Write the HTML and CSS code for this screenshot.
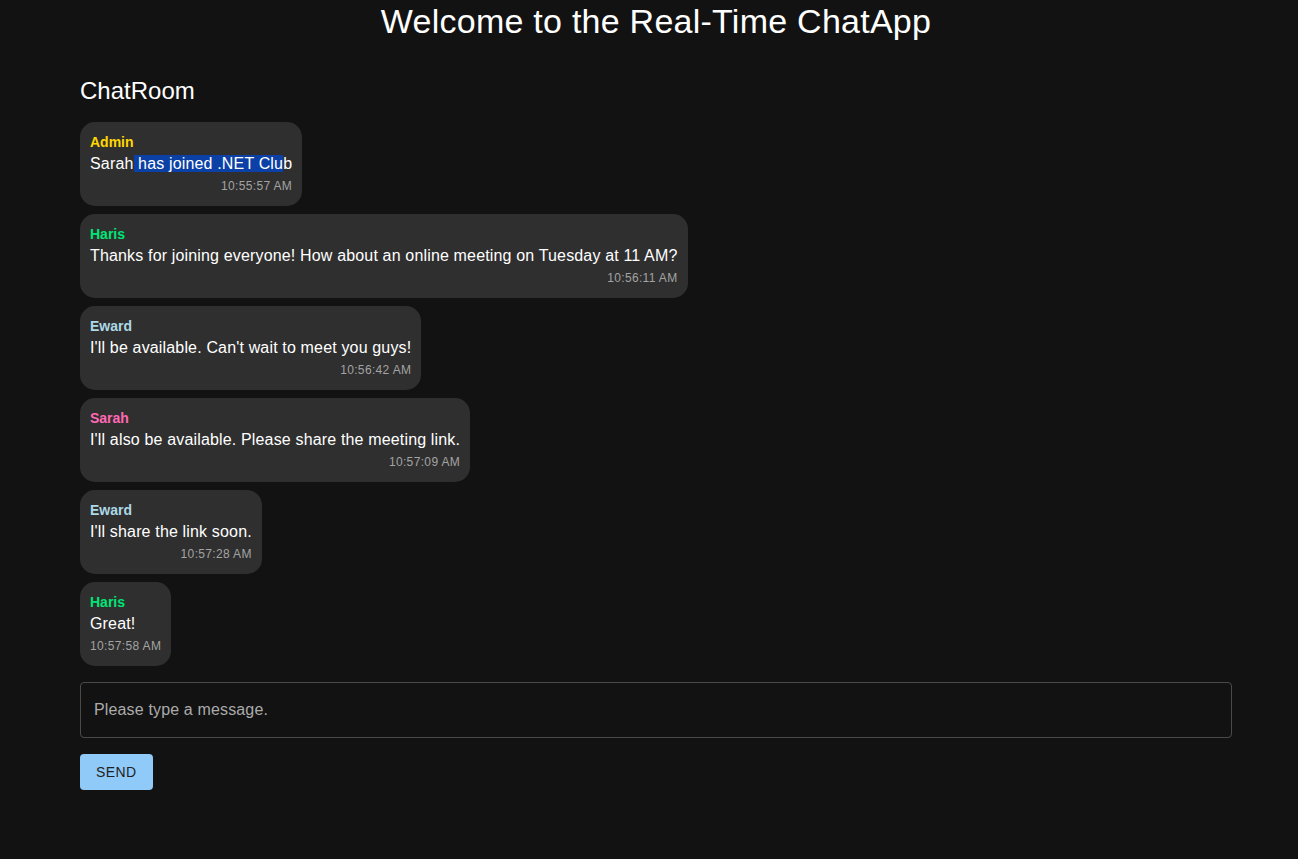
FILE: index.html
```html
<!DOCTYPE html>
<html lang="en">
<head>
<meta charset="utf-8">
<title>Real-Time ChatApp</title>
<link rel="stylesheet" href="styles.css">
</head>
<body>
<div class="page">
  <h1 class="title">Welcome to the Real-Time ChatApp</h1>
  <main class="container">
    <h2 class="room">ChatRoom</h2>
    <div class="messages">
      <div class="bubble">
        <div class="name admin">Admin</div>
        <div class="text">Sarah<span class="sel"> has joined .NET Clu</span>b</div>
        <div class="time">10:55:57 AM</div>
      </div>
      <div class="bubble">
        <div class="name haris">Haris</div>
        <div class="text">Thanks for joining everyone! How about an online meeting on Tuesday at 11 AM?</div>
        <div class="time">10:56:11 AM</div>
      </div>
      <div class="bubble">
        <div class="name eward">Eward</div>
        <div class="text">I'll be available. Can't wait to meet you guys!</div>
        <div class="time">10:56:42 AM</div>
      </div>
      <div class="bubble">
        <div class="name sarah">Sarah</div>
        <div class="text">I'll also be available. Please share the meeting link.</div>
        <div class="time">10:57:09 AM</div>
      </div>
      <div class="bubble">
        <div class="name eward">Eward</div>
        <div class="text">I'll share the link soon.</div>
        <div class="time">10:57:28 AM</div>
      </div>
      <div class="bubble">
        <div class="name haris">Haris</div>
        <div class="text">Great!</div>
        <div class="time">10:57:58 AM</div>
      </div>
    </div>
    <form class="composer">
      <div class="field"><input class="input" type="text" placeholder="Please type a message."></div>
      <div><button class="send" type="button">Send</button></div>
    </form>
  </main>
</div>
</body>
</html>
```

FILE: styles.css
```css
html, body {
  margin: 0;
  padding: 0;
  background: #121212;
  color: #ffffff;
  font-family: "Liberation Sans", Arial, sans-serif;
}

.page {
  display: flex;
  flex-direction: column;
}

.title {
  margin: 0 0 0 14px;
  font-size: 34px;
  font-weight: 400;
  line-height: 42px;
  letter-spacing: 0.25px;
  text-align: center;
}

.container {
  width: 1152px;
  margin: 33px 0 0 80px;
  display: flex;
  flex-direction: column;
}

.room {
  margin: 0 0 15px 0;
  font-size: 24px;
  font-weight: 400;
  line-height: 32px;
}

.messages {
  display: flex;
  flex-direction: column;
  align-items: flex-start;
  gap: 8px;
}

.bubble {
  background: #2f2f2f;
  border-radius: 15px;
  padding: 10px;
  display: flex;
  flex-direction: column;
}

.name {
  font-size: 14px;
  font-weight: 700;
  line-height: 20px;
}

.admin { color: #ffd700; }
.haris { color: #00e676; }
.eward { color: #add8e6; }
.sarah { color: #ff69b4; }

.text {
  font-size: 16px;
  line-height: 24px;
  letter-spacing: 0.16px;
}

.sel {
  background: #0b40a6;
}

.time {
  font-size: 12px;
  font-weight: 400;
  line-height: 20px;
  letter-spacing: 0.35px;
  color: #a3a3a3;
  text-align: right;
}

.composer {
  margin-top: 16px;
  display: flex;
  flex-direction: column;
  gap: 16px;
}

.field {
  display: flex;
}

.input {
  flex: 1;
  box-sizing: border-box;
  height: 56px;
  margin: 0;
  padding: 0 13px;
  background: transparent;
  border: 1px solid #4a4a4a;
  border-radius: 4px;
  color: #ffffff;
  font-family: "Liberation Sans", Arial, sans-serif;
  font-size: 16px;
  letter-spacing: 0.15px;
  outline: none;
}

.input::placeholder {
  color: #ababab;
  opacity: 1;
}

.send {
  height: 36px;
  padding: 0 16px;
  background: #90caf9;
  border: none;
  border-radius: 4px;
  color: #1f1f1f;
  font-family: "Liberation Sans", Arial, sans-serif;
  font-size: 14px;
  letter-spacing: 0.4px;
  text-transform: uppercase;
  cursor: pointer;
}
```
